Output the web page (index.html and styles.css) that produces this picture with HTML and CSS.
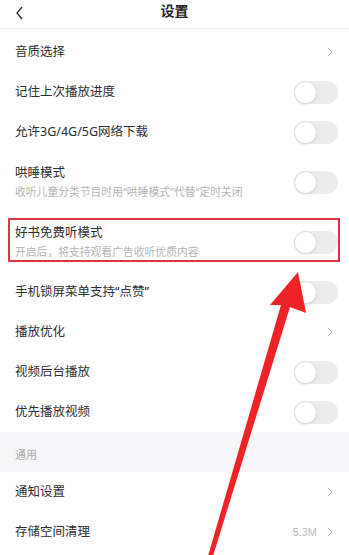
FILE: index.html
```html
<!DOCTYPE html>
<html lang="zh-CN">
<head>
<meta charset="utf-8">
<title>设置</title>
<link rel="stylesheet" href="styles.css">
</head>
<body>
<div class="page">
  <header class="topbar">
    <svg class="back" width="10" height="14" viewBox="0 0 10 14"><polyline points="7,1 2,7 7,13" fill="none" stroke="#333" stroke-width="1.4"/></svg>
    <h1 class="title">设置</h1>
  </header>
  <ul class="list first">
    <li class="row"><span class="label">音质选择</span><svg class="chev" width="6" height="10" viewBox="0 0 6 10"><polyline points="1,1 5,5 1,9" fill="none" stroke="#bbb" stroke-width="1"/></svg></li>
    <li class="row"><span class="label">记住上次播放进度</span><span class="toggle"><span class="knob"></span></span></li>
    <li class="row"><span class="label">允许3G/4G/5G网络下载</span><span class="toggle"><span class="knob"></span></span></li>
    <li class="row tall"><div class="texts"><span class="label">哄睡模式</span><span class="sub">收听儿童分类节目时用“哄睡模式”代替“定时关闭</span></div><span class="toggle"><span class="knob"></span></span></li>
    <li class="row tall marked"><div class="texts"><span class="label">好书免费听模式</span><span class="sub">开启后，将支持观看广告收听优质内容</span></div><span class="toggle"><span class="knob"></span></span></li>
    <li class="row"><span class="label">手机锁屏菜单支持“点赞”</span><span class="toggle"><span class="knob"></span></span></li>
    <li class="row"><span class="label">播放优化</span><svg class="chev" width="6" height="10" viewBox="0 0 6 10"><polyline points="1,1 5,5 1,9" fill="none" stroke="#bbb" stroke-width="1"/></svg></li>
    <li class="row"><span class="label">视频后台播放</span><span class="toggle"><span class="knob"></span></span></li>
    <li class="row"><span class="label">优先播放视频</span><span class="toggle"><span class="knob"></span></span></li>
  </ul>
  <div class="section">通用</div>
  <ul class="list">
    <li class="row"><span class="label">通知设置</span><svg class="chev" width="6" height="10" viewBox="0 0 6 10"><polyline points="1,1 5,5 1,9" fill="none" stroke="#bbb" stroke-width="1"/></svg></li>
    <li class="row"><span class="label">存储空间清理</span><span class="right"><span class="value">5.3M</span><svg class="chev" width="6" height="10" viewBox="0 0 6 10"><polyline points="1,1 5,5 1,9" fill="none" stroke="#bbb" stroke-width="1"/></svg></span></li>
  </ul>
  <svg class="arrow" width="349" height="555" viewBox="0 0 349 555">
    <polygon points="298,272 306,313 290,307 213,556 208,556 281,305 270,305" fill="#ee2227"/>
  </svg>
</div>
</body>
</html>
```
FILE: styles.css
```css
* { box-sizing: border-box; }
html, body { margin: 0; padding: 0; background: #fff; }
body {
  font-family: "Noto Sans", "Noto Sans CJK SC", sans-serif;
  color: #333;
  width: 349px;
  height: 555px;
  overflow: hidden;
}
.page { position: relative; width: 349px; height: 555px; overflow: hidden; }
.topbar {
  position: relative;
  height: 29px;
  border-bottom: 1px solid #ececec;
  display: flex;
  align-items: center;
  justify-content: center;
}
.back { position: absolute; left: 15px; top: 6px; }
.title {
  margin: 0;
  font-size: 14px;
  font-weight: 700;
  line-height: 20px;
  margin-top: -6px;
  color: #222;
}
.list { list-style: none; margin: 0; padding: 0; }
.list.first { padding-top: 3px; }
.row {
  position: relative;
  height: 40px;
  display: flex;
  align-items: center;
  justify-content: space-between;
  padding: 0 11px 0 15px;
}
.row.tall { height: 60px; }
.label { font-size: 12.5px; line-height: 18px; color: #2e2e2e; }
.texts { display: flex; flex-direction: column; gap: 1px; }
.sub { font-size: 10.8px; line-height: 18px; color: #b5b5b5; }
.chev { margin-right: 5px; }
.right { display: flex; align-items: center; gap: 10px; }
.value { font-family: "Liberation Sans", sans-serif; font-size: 11px; color: #bbb; }
.toggle {
  width: 44px;
  height: 23px;
  border-radius: 12px;
  background: #ececec;
  display: flex;
  align-items: center;
}
.knob {
  width: 23px;
  height: 23px;
  border-radius: 50%;
  background: #fff;
  border: 1px solid #dcdcdc;
  box-shadow: 0 1px 2px rgba(0,0,0,0.08);
}
.marked::after {
  content: "";
  position: absolute;
  left: 8px;
  right: 9px;
  top: 6px;
  bottom: 10px;
  border: 2px solid #e0353c;
  pointer-events: none;
}
.section {
  height: 40px;
  background: #f6f6f8;
  display: flex;
  align-items: center;
  padding: 4px 15px 0;
  font-size: 11px;
  color: #aaa;
}
.arrow { position: absolute; left: 0; top: 0; pointer-events: none; }
```
